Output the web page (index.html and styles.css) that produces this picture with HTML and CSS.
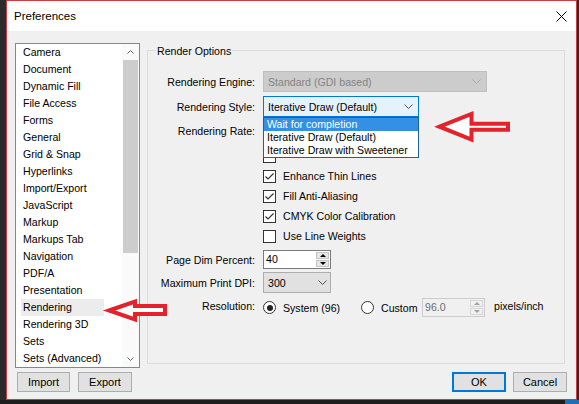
FILE: index.html
```html
<!DOCTYPE html>
<html>
<head>
<meta charset="utf-8">
<title>Preferences</title>
<link rel="stylesheet" href="styles.css">
</head>
<body>
<div class="window">
  <div class="titlebar">
    <span class="title">Preferences</span>
    <svg class="close" width="11" height="11" viewBox="0 0 11 11"><path d="M0.5 0.5L10.5 10.5M10.5 0.5L0.5 10.5" stroke="#000" stroke-width="1" fill="none"/></svg>
  </div>
  <div class="content">
    <div class="leftcol">
      <div class="list">
        <div class="items">
          <div class="item">Camera</div>
          <div class="item">Document</div>
          <div class="item">Dynamic Fill</div>
          <div class="item">File Access</div>
          <div class="item">Forms</div>
          <div class="item">General</div>
          <div class="item">Grid &amp; Snap</div>
          <div class="item">Hyperlinks</div>
          <div class="item">Import/Export</div>
          <div class="item">JavaScript</div>
          <div class="item">Markup</div>
          <div class="item">Markups Tab</div>
          <div class="item">Navigation</div>
          <div class="item">PDF/A</div>
          <div class="item">Presentation</div>
          <div class="item sel">Rendering</div>
          <div class="item">Rendering 3D</div>
          <div class="item">Sets</div>
          <div class="item">Sets (Advanced)</div>
        </div>
        <div class="scrollbar">
          <div class="sb-btn"><svg width="7" height="4" viewBox="0 0 7 4"><path d="M0.5 3.5L3.5 0.5L6.5 3.5" stroke="#606060" fill="none"/></svg></div>
          <div class="thumb"></div>
          <div class="sb-fill"></div>
          <div class="sb-btn"><svg width="7" height="4" viewBox="0 0 7 4"><path d="M0.5 0.5L3.5 3.5L6.5 0.5" stroke="#606060" fill="none"/></svg></div>
        </div>
      </div>
      <div class="btnrow left">
        <div class="btn imp">Import</div>
        <div class="btn exp">Export</div>
      </div>
    </div>
    <div class="rightcol">
      <div class="group">
        <div class="gtitle">Render Options</div>
        <div class="row r1">
          <div class="lbl">Rendering Engine:</div>
          <div class="combo disabled"><span>Standard (GDI based)</span><svg width="9" height="5" viewBox="0 0 9 5"><path d="M0.5 0.5L4.5 4.5L8.5 0.5" stroke="#a8a8a8" fill="none"/></svg></div>
        </div>
        <div class="row r2">
          <div class="lbl">Rendering Style:</div>
          <div class="combo focus"><span>Iterative Draw (Default)</span><svg width="9" height="5" viewBox="0 0 9 5"><path d="M0.5 0.5L4.5 4.5L8.5 0.5" stroke="#505050" fill="none"/></svg>
            <div class="dropdown">
              <div class="dd-item hl">Wait for completion</div>
              <div class="dd-item">Iterative Draw (Default)</div>
              <div class="dd-item">Iterative Draw with Sweetener</div>
            </div>
          </div>
        </div>
        <div class="row r3">
          <div class="lbl">Rendering Rate:</div>
        </div>
        <div class="cbrow first"><div class="cb"></div></div>
        <div class="cbrow"><div class="cb"><svg width="11" height="11" viewBox="0 0 11 11"><path d="M1.5 5.5L4 8L9.5 2.5" stroke="#333" stroke-width="1.2" fill="none"/></svg></div><span>Enhance Thin Lines</span></div>
        <div class="cbrow"><div class="cb"><svg width="11" height="11" viewBox="0 0 11 11"><path d="M1.5 5.5L4 8L9.5 2.5" stroke="#333" stroke-width="1.2" fill="none"/></svg></div><span>Fill Anti-Aliasing</span></div>
        <div class="cbrow"><div class="cb"><svg width="11" height="11" viewBox="0 0 11 11"><path d="M1.5 5.5L4 8L9.5 2.5" stroke="#333" stroke-width="1.2" fill="none"/></svg></div><span>CMYK Color Calibration</span></div>
        <div class="cbrow"><div class="cb"></div><span>Use Line Weights</span></div>
        <div class="row r4">
          <div class="lbl">Page Dim Percent:</div>
          <div class="spin"><span class="val">40</span><div class="arrows"><div class="half"><i class="up"></i></div><div class="half"><i class="down"></i></div></div></div>
        </div>
        <div class="row r5">
          <div class="lbl">Maximum Print DPI:</div>
          <div class="combo dpi"><span>300</span><svg width="9" height="5" viewBox="0 0 9 5"><path d="M0.5 0.5L4.5 4.5L8.5 0.5" stroke="#505050" fill="none"/></svg></div>
        </div>
        <div class="row r6">
          <div class="lbl lift">Resolution:</div>
          <div class="opt1"><div class="radio on"></div><span>System (96)</span></div>
          <div class="radio"></div><span class="ctext">Custom</span>
          <div class="spin disabled"><span class="val">96.0</span><div class="arrows"><div class="half"><i class="up"></i></div><div class="half"><i class="down"></i></div></div></div>
          <span class="unit lift">pixels/inch</span>
        </div>
      </div>
      <div class="btnrow right">
        <div class="btn ok">OK</div>
        <div class="btn cancel">Cancel</div>
      </div>
    </div>
  </div>
</div>
<div class="taskbar"><div class="tb-seg"></div><div class="tb-fill"></div><div class="tb-seg end"></div></div>
<svg class="arrows-overlay" width="579" height="404" viewBox="0 0 579 404">
  <path d="M439.5 126.7L471.5 114L471.5 123.7L508 123.7L508 129.7L471.5 129.7L471.5 139.5Z" fill="#fff" stroke="#e3222b" stroke-width="4" stroke-linejoin="miter"/>
  <path d="M109 310.5L135 301.5L135 306L165 306L165 314L135 314L135 319.5Z" fill="#fff" stroke="#e3222b" stroke-width="4" stroke-linejoin="miter"/>
</svg>
</body>
</html>
```
FILE: styles.css
```css
body {
  margin: 0;
  width: 579px;
  height: 404px;
  overflow: hidden;
  background: #2b2b2b;
  font-family: "Liberation Sans", Arial, sans-serif;
  font-size: 10.6px;
  color: #000;
  position: relative;
}

.window {
  margin-left: 6px;
  width: 571px;
  height: 400px;
  box-sizing: border-box;
  border: 1px solid #cf3a40;
  background: #f0f0f0;
  display: flex;
  flex-direction: column;
}

.titlebar {
  height: 30px;
  flex: none;
  background: #fff;
  display: flex;
  align-items: center;
  justify-content: space-between;
  padding: 0 9px 0 7px;
}

.title {
  font-size: 11.5px;
}

.content {
  flex: 1;
  display: flex;
  gap: 7px;
  padding: 12px 0 0 8px;
}

.leftcol {
  width: 125px;
  display: flex;
  flex-direction: column;
}

.list {
  height: 325px;
  box-sizing: border-box;
  border: 1px solid #828790;
  background: #fff;
  display: flex;
}

.items {
  flex: 1;
}

.item {
  height: 17px;
  line-height: 17px;
  margin-left: 5px;
  padding-left: 2px;
  width: 81px;
  white-space: nowrap;
}

.item.sel {
  background: #ececec;
}

.scrollbar {
  width: 17px;
  display: flex;
  flex-direction: column;
  background: #fafafa;
}

.sb-btn {
  height: 16px;
  display: flex;
  align-items: center;
  justify-content: center;
}

.thumb {
  height: 193px;
  margin: 0 1px;
  background: #cdcdcd;
}

.sb-fill {
  flex: 1;
}

.btnrow {
  display: flex;
}

.btnrow.left {
  gap: 8px;
  margin: 4px 0 0 2px;
}

.btn {
  height: 20px;
  box-sizing: border-box;
  border: 1px solid #adadad;
  background: #e1e1e1;
  display: flex;
  align-items: center;
  justify-content: center;
  font-size: 11px;
}

.imp { width: 53px; }
.exp { width: 54px; }
.ok { width: 54px; border: 2px solid #0078d7; }
.cancel { width: 54px; }

.rightcol {
  width: 420px;
  display: flex;
  flex-direction: column;
}

.group {
  width: 418px;
  height: 314px;
  box-sizing: border-box;
  border: 1px solid #dcdcdc;
  margin-top: 7px;
}

.btnrow.right {
  justify-content: flex-end;
  gap: 7px;
  margin-top: 8px;
}

.gtitle {
  margin: -6px 0 0 8px;
  padding: 0 1px;
  background: #f0f0f0;
  width: max-content;
  line-height: 13px;
}

.row {
  display: flex;
  align-items: center;
}

.lbl {
  width: 107px;
  text-align: right;
  margin-right: 8px;
  flex: none;
  white-space: nowrap;
}

.lift {
  padding-bottom: 4px;
}

.r1 { margin-top: 13px; height: 21px; }
.r2 { margin-top: 4px; height: 21px; }
.r3 { margin-top: 3px; height: 21px; }
.r4 { margin-top: 4px; height: 19px; }
.r5 { margin-top: 3px; height: 21px; }
.r6 { margin-top: 5px; height: 19px; }

.combo {
  height: 21px;
  box-sizing: border-box;
  border: 1px solid #adadad;
  display: flex;
  align-items: center;
  justify-content: space-between;
  padding: 0 5px 0 4px;
  white-space: nowrap;
}

.combo.disabled {
  width: 224px;
  background: #cccccc;
  border-color: #bfbfbf;
  color: #838383;
}

.combo.focus {
  width: 156px;
  background: #e5f1fb;
  border-color: #0078d7;
  position: relative;
}

.combo.dpi {
  width: 68px;
  background: #e1e1e1;
  padding-right: 3px;
}

.dropdown {
  position: absolute;
  left: -1px;
  top: 20px;
  width: 156px;
  box-sizing: border-box;
  border: 1px solid #1d5fa3;
  background: #fff;
  z-index: 2;
}

.dd-item {
  height: 13px;
  line-height: 13px;
  padding-left: 3px;
  white-space: nowrap;
}

.dd-item.hl {
  background: #3390e4;
  color: #fff;
}

.cbrow {
  height: 20px;
  display: flex;
  align-items: center;
  padding-left: 115px;
}

.cbrow.first {
  margin-top: 5px;
}

.cb {
  width: 13px;
  height: 13px;
  box-sizing: border-box;
  border: 1px solid #333;
  background: #fff;
  margin-right: 7px;
  flex: none;
  display: flex;
}

.spin {
  width: 68px;
  height: 19px;
  box-sizing: border-box;
  border: 1px solid #7a7a7a;
  background: #fff;
  display: flex;
  flex: none;
}

.spin .val {
  flex: 1;
  padding-left: 2px;
  line-height: 17px;
}

.spin .arrows {
  width: 13px;
  margin: 1px 1px 1px 0;
  display: flex;
  flex-direction: column;
  gap: 1px;
}

.spin .half {
  flex: 1;
  background: #e6e6e6;
  border: 1px solid #c4c4c4;
  box-sizing: border-box;
  display: flex;
  align-items: center;
  justify-content: center;
}

.up {
  width: 0;
  height: 0;
  border-left: 3px solid transparent;
  border-right: 3px solid transparent;
  border-bottom: 3px solid #000;
}

.down {
  width: 0;
  height: 0;
  border-left: 3px solid transparent;
  border-right: 3px solid transparent;
  border-top: 3px solid #000;
}

.spin.disabled {
  width: 63px;
  background: #f0f0f0;
  border-color: #cccccc;
  color: #6d6d6d;
  margin-right: 9px;
}

.spin.disabled .half {
  background: #f0f0f0;
  border-color: #d6d6d6;
}

.spin.disabled .up { border-bottom-color: #a0a0a0; }
.spin.disabled .down { border-top-color: #a0a0a0; }

.opt1 {
  width: 98px;
  display: flex;
  align-items: center;
  flex: none;
}

.radio {
  width: 13px;
  height: 13px;
  box-sizing: border-box;
  border: 1px solid #333;
  border-radius: 50%;
  background: #fff;
  display: flex;
  align-items: center;
  justify-content: center;
  margin-right: 7px;
  flex: none;
}

.radio.on::after {
  content: "";
  width: 6px;
  height: 6px;
  border-radius: 50%;
  background: #222;
}

.ctext {
  width: 41px;
  flex: none;
}

.unit {
  white-space: nowrap;
}

.taskbar {
  height: 4px;
  display: flex;
  background: #1e1e1e;
}

.tb-seg {
  width: 0;
}

.tb-fill {
  flex: 1;
}

.tb-seg.end {
  width: 14px;
  background: #1f6fb5;
}

.arrows-overlay {
  position: absolute;
  left: 0;
  top: 0;
  pointer-events: none;
}
```
